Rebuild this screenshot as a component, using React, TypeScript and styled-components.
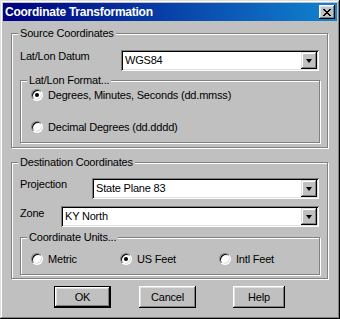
import React from "react";
import styled, { createGlobalStyle } from "styled-components";

const Global = createGlobalStyle`
  html, body { margin: 0; padding: 0; background: #c0c0c0; }
  * { box-sizing: border-box; }
`;

const Window = styled.div`
  width: 340px;
  height: 319px;
  background: #c0c0c0;
  padding: 3px;
  box-shadow: inset -1px -1px #000, inset 1px 1px #dfdfdf, inset -2px -2px #808080, inset 2px 2px #fff;
  font-family: "Liberation Sans", Arial, sans-serif;
  font-size: 11px;
  letter-spacing: -0.2px;
  color: #000;
  display: flex;
  flex-direction: column;
`;

const TitleBar = styled.div`
  height: 18px;
  background: linear-gradient(to right, #000080, #1084d0);
  display: flex;
  align-items: center;
  justify-content: space-between;
  padding-left: 2px;
  padding-right: 2px;
`;

const Title = styled.span`
  color: #fff;
  font-weight: bold;
  font-size: 12px;
  letter-spacing: -0.25px;
  line-height: 14px;
`;

const CloseButton = styled.div`
  width: 16px;
  height: 14px;
  background: #c0c0c0;
  box-shadow: inset -1px -1px #000, inset 1px 1px #fff, inset -2px -2px #808080, inset 2px 2px #dfdfdf;
  display: flex;
  align-items: center;
  justify-content: center;
`;

const Body = styled.div`
  display: flex;
  flex-direction: column;
  padding: 0 9px 0 8px;
`;

const Group = styled.div<{ $mt: number; $pt: number; $pb: number; $inner?: boolean }>`
  position: relative;
  margin-top: ${(p) => p.$mt}px;
  padding: ${(p) => p.$pt}px 8px ${(p) => p.$pb}px 8px;
  margin-right: ${(p) => (p.$inner ? "-1px" : "0")};
  border: 1px solid #808080;
  box-shadow: inset 1px 1px #fff, 1px 1px #fff;
  display: flex;
  flex-direction: column;
`;

const Legend = styled.span`
  position: absolute;
  top: -7px;
  left: 6px;
  padding: 0 2px;
  background: #c0c0c0;
  line-height: 13px;
  white-space: nowrap;
`;

const FieldRow = styled.div<{ $mt?: number }>`
  display: flex;
  align-items: flex-start;
  justify-content: space-between;
  margin-top: ${(p) => p.$mt ?? 0}px;
`;

const Label = styled.span<{ $mt?: number }>`
  line-height: 13px;
  margin-top: ${(p) => p.$mt ?? 0}px;
  white-space: nowrap;
`;

const Combo = styled.div<{ $w: number }>`
  width: ${(p) => p.$w}px;
  height: 21px;
  background: #fff;
  padding: 2px;
  box-shadow: inset 1px 1px #808080, inset -1px -1px #fff, inset 2px 2px #000, inset -2px -2px #dfdfdf;
  display: flex;
  align-items: center;
`;

const ComboText = styled.span`
  flex: 1;
  padding-left: 2px;
  line-height: 17px;
  white-space: nowrap;
`;

const DropButton = styled.div`
  width: 16px;
  height: 17px;
  background: #c0c0c0;
  box-shadow: inset -1px -1px #000, inset 1px 1px #dfdfdf, inset -2px -2px #808080, inset 2px 2px #fff;
  display: flex;
  align-items: center;
  justify-content: center;
`;

const Arrow = styled.span`
  width: 0;
  height: 0;
  border-left: 3.5px solid transparent;
  border-right: 3.5px solid transparent;
  border-top: 4px solid #000;
  margin-top: 1px;
`;

const RadioList = styled.div<{ $gap: number; $row?: boolean }>`
  display: flex;
  flex-direction: ${(p) => (p.$row ? "row" : "column")};
  gap: ${(p) => p.$gap}px;
  padding-left: 2px;
`;

const RadioItem = styled.div<{ $w?: number }>`
  display: flex;
  align-items: center;
  height: 16px;
  width: ${(p) => (p.$w ? `${p.$w}px` : "auto")};
  white-space: nowrap;
`;

const RadioCircle = styled.span<{ $checked?: boolean }>`
  position: relative;
  width: 12px;
  height: 12px;
  border-radius: 50%;
  background: #fff;
  border: 1px solid;
  border-color: #808080 #fff #fff #808080;
  box-shadow: inset 1px 1px #000, inset -1px -1px #dfdfdf;
  margin-right: 5px;
  flex: none;
  &::after {
    content: "";
    display: ${(p) => (p.$checked ? "block" : "none")};
    position: absolute;
    left: 3px;
    top: 3px;
    width: 4px;
    height: 4px;
    border-radius: 50%;
    background: #000;
  }
`;

const RadioLabel = styled.span`
  line-height: 13px;
`;

const ButtonRow = styled.div`
  display: flex;
  margin-top: 7px;
  padding-left: 43px;
`;

const Button = styled.div<{ $w: number; $ml?: number; $default?: boolean }>`
  width: ${(p) => p.$w}px;
  height: 22px;
  margin-left: ${(p) => p.$ml ?? 0}px;
  background: #c0c0c0;
  border: ${(p) => (p.$default ? "1px solid #000" : "none")};
  box-shadow: inset -1px -1px #000, inset 1px 1px #fff, inset -2px -2px #808080, inset 2px 2px #dfdfdf;
  display: flex;
  align-items: center;
  justify-content: center;
  line-height: 13px;
`;

function Radio({ label, checked, w }: { label: string; checked?: boolean; w?: number }) {
  return (
    <RadioItem $w={w}>
      <RadioCircle $checked={checked} />
      <RadioLabel>{label}</RadioLabel>
    </RadioItem>
  );
}

function Select({ value, w }: { value: string; w: number }) {
  return (
    <Combo $w={w}>
      <ComboText>{value}</ComboText>
      <DropButton>
        <Arrow />
      </DropButton>
    </Combo>
  );
}

export default function App() {
  return (
    <>
      <Global />
      <Window>
        <TitleBar>
          <Title>Coordinate Transformation</Title>
          <CloseButton>
            <svg width="8" height="7" viewBox="0 0 8 7">
              <path d="M0 0h2v1h1v1h2V1h1V0h2v1H7v1H6v1H5v1h1v1h1v1h1v1H6V6H5V5H3v1H2v1H0V6h1V5h1V4h1V3H2V2H1V1H0z" fill="#000" />
            </svg>
          </CloseButton>
        </TitleBar>
        <Body>
          <Group $mt={12} $pt={16} $pb={4}>
            <Legend>Source Coordinates</Legend>
            <FieldRow>
              <Label>Lat/Lon Datum</Label>
              <Select value="WGS84" w={198} />
            </FieldRow>
            <Group $mt={9} $pt={6} $pb={7} $inner>
              <Legend>Lat/Lon Format...</Legend>
              <RadioList $gap={16}>
                <Radio label="Degrees, Minutes, Seconds (dd.mmss)" checked />
                <Radio label="Decimal Degrees (dd.dddd)" />
              </RadioList>
            </Group>
          </Group>
          <Group $mt={14} $pt={15} $pb={3}>
            <Legend>Destination Coordinates</Legend>
            <FieldRow>
              <Label>Projection</Label>
              <Select value="State Plane 83" w={227} />
            </FieldRow>
            <FieldRow $mt={7}>
              <Label $mt={1}>Zone</Label>
              <Select value="KY North" w={258} />
            </FieldRow>
            <Group $mt={10} $pt={13} $pb={7} $inner>
              <Legend>Coordinate Units...</Legend>
              <RadioList $gap={0} $row>
                <Radio label="Metric" w={89} />
                <Radio label="US Feet" checked w={99} />
                <Radio label="Intl Feet" />
              </RadioList>
            </Group>
          </Group>
          <ButtonRow>
            <Button $w={57} $default>OK</Button>
            <Button $w={57} $ml={28}>Cancel</Button>
            <Button $w={52} $ml={37}>Help</Button>
          </ButtonRow>
        </Body>
      </Window>
    </>
  );
}
